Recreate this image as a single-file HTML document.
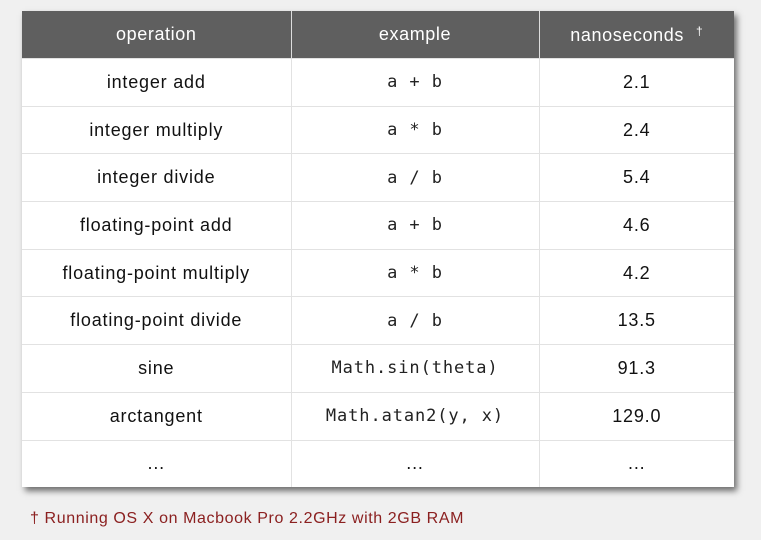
<!DOCTYPE html>
<html><head><style>
body{margin:0;width:761px;height:540px;background:#f0f0f0;position:relative;overflow:hidden;font-family:"Liberation Sans","DejaVu Sans",sans-serif;}
table{position:absolute;left:22px;top:11px;width:712px;border-collapse:collapse;background:#fff;box-shadow:3px 4px 6px rgba(0,0,0,0.55);}
th{background:#5f5f5f;color:#fff;font-weight:normal;font-size:18px;letter-spacing:0.6px;height:47px;padding:0;border-left:1px solid #ddd;}
th:first-child{border-left:none}
td{height:46.7px;padding:0;text-align:center;font-size:18px;letter-spacing:0.8px;color:#111;border-top:1px solid #e2e2e2;border-left:1px solid #e2e2e2;}
td:first-child{border-left:none}
.m{font-family:"DejaVu Sans Mono","Liberation Mono",monospace;font-size:17px;letter-spacing:0.9px;color:#222;}
sup{font-size:12px;vertical-align:6px;margin-left:12px}
.f{position:absolute;left:30px;top:510px;color:#8b2020;font-size:16px;letter-spacing:0.6px;}
</style></head><body>
<table>
<colgroup><col style="width:269px"><col style="width:248px"><col style="width:195px"></colgroup>
<tr><th>operation</th><th>example</th><th>nanoseconds<sup>†</sup></th></tr>
<tr><td>integer add</td><td class="m">a + b</td><td>2.1</td></tr>
<tr><td>integer multiply</td><td class="m">a * b</td><td>2.4</td></tr>
<tr><td>integer divide</td><td class="m">a / b</td><td>5.4</td></tr>
<tr><td>floating-point add</td><td class="m">a + b</td><td>4.6</td></tr>
<tr><td>floating-point multiply</td><td class="m">a * b</td><td>4.2</td></tr>
<tr><td>floating-point divide</td><td class="m">a / b</td><td>13.5</td></tr>
<tr><td>sine</td><td class="m">Math.sin(theta)</td><td>91.3</td></tr>
<tr><td>arctangent</td><td class="m">Math.atan2(y, x)</td><td>129.0</td></tr>
<tr><td>...</td><td>...</td><td>...</td></tr>
</table>
<div class="f">† Running OS X on Macbook Pro 2.2GHz with 2GB RAM</div>
</body></html>
